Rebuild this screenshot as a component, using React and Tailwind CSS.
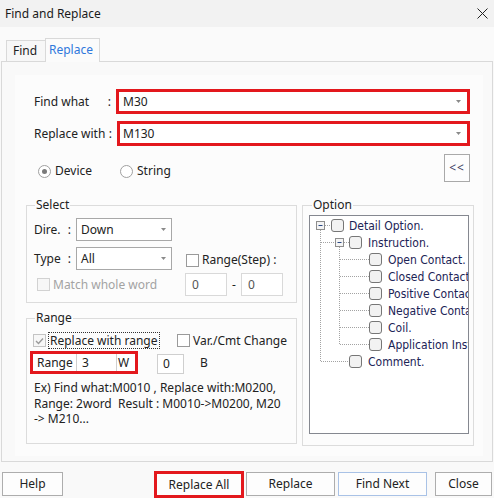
import React from "react";

const RED = "border-[3px] border-[#e3181d]";

function Arrow({ className = "" }) {
  return (
    <svg width="5" height="3" viewBox="0 0 5 3" className={className}>
      <path d="M0 0h5L2.5 3z" fill="#8a8a8a" />
    </svg>
  );
}

function Checkbox({ variant = "normal" }) {
  if (variant === "disabled") {
    return <span className="block w-[13px] h-[13px] shrink-0 border border-[#d2d2d2] bg-[#f7f7f7]" />;
  }
  if (variant === "checked") {
    return (
      <span className="flex items-center justify-center w-[13px] h-[13px] shrink-0 border border-[#c4c4c4] bg-[#f7f7f7]">
        <svg width="9" height="8" viewBox="0 0 9 8">
          <path d="M1 4l2.5 2.5L8 1.5" fill="none" stroke="#9a9a9a" strokeWidth="1.4" />
        </svg>
      </span>
    );
  }
  return <span className="block w-[13px] h-[13px] shrink-0 border border-[#9a9a9a] bg-white" />;
}

function Radio({ checked }) {
  return (
    <span className="flex items-center justify-center w-[13px] h-[13px] shrink-0 rounded-full border border-[#a0a0a0] bg-white">
      {checked && <span className="block w-[5px] h-[5px] rounded-full bg-[#7a7a7a]" />}
    </span>
  );
}

function Group({ title, className = "", legendClass = "ml-[8px]", children }) {
  return (
    <fieldset className={`border border-[#dcdcdc] ${className}`}>
      <legend className={`${legendClass} px-[1px] leading-[14px]`}>{title}</legend>
      {children}
    </fieldset>
  );
}

function Combo({ value }) {
  return (
    <div className="w-[96px] h-[23px] border border-[#a8a8a8] bg-white flex items-center justify-between pl-[4px] pr-[5px]">
      <span>{value}</span>
      <Arrow />
    </div>
  );
}

const treeRows = [
  { label: "Detail Option.", pl: "pl-[21px]", gap: "ml-[5px]" },
  { label: "Instruction.", pl: "pl-[39px]", gap: "ml-[6px]" },
  { label: "Open Contact.", pl: "pl-[59px]", gap: "ml-[6px]" },
  { label: "Closed Contact", pl: "pl-[59px]", gap: "ml-[6px]" },
  { label: "Positive Contact", pl: "pl-[59px]", gap: "ml-[6px]" },
  { label: "Negative Contact", pl: "pl-[59px]", gap: "ml-[6px]" },
  { label: "Coil.", pl: "pl-[59px]", gap: "ml-[6px]" },
  { label: "Application Instruction", pl: "pl-[59px]", gap: "ml-[6px]" },
  { label: "Comment.", pl: "pl-[39px]", gap: "ml-[6px]" },
];

function TreeLines() {
  const cy = (i) => 9.5 + 17 * i;
  const dot = { stroke: "#a3a3a3", strokeDasharray: "1 1", strokeWidth: 1 };
  return (
    <svg className="absolute left-0 top-0" width="158" height="217" viewBox="0 0 158 217">
      {/* level 1 */}
      <line x1="15" y1={cy(0)} x2="21" y2={cy(0)} {...dot} />
      <line x1="10.5" y1="14" x2="10.5" y2={cy(8)} {...dot} />
      <line x1="11" y1={cy(1)} x2="25" y2={cy(1)} {...dot} />
      <line x1="11" y1={cy(8)} x2="39" y2={cy(8)} {...dot} />
      {/* level 2 */}
      <line x1="34" y1={cy(1)} x2="39" y2={cy(1)} {...dot} />
      <line x1="29.5" y1="31" x2="29.5" y2={cy(7)} {...dot} />
      {[2, 3, 4, 5, 6, 7].map((i) => (
        <line key={i} x1="30" y1={cy(i)} x2="59" y2={cy(i)} {...dot} />
      ))}
      {/* expand boxes */}
      {[6.5, 25.5].map((x, i) => (
        <g key={x}>
          <rect x={x} y={cy(i) - 4} width="8" height="8" fill="#f4f4f4" stroke="#8e8e8e" />
          <line x1={x + 2} y1={cy(i)} x2={x + 6} y2={cy(i)} stroke="#2b4a86" />
        </g>
      ))}
    </svg>
  );
}

export default function App() {
  return (
    <div className="w-[494px] h-[498px] overflow-hidden bg-[#f9f9f9] text-[12px] text-[#222] font-['Noto_Sans','Liberation_Sans',sans-serif]">
      {/* Title bar */}
      <div className="h-[27px] bg-[#f2f2f2] flex items-center justify-between pl-[5px] pr-[6px]">
        <span className="text-[#1a1a1a]">Find and Replace</span>
        <svg width="11" height="11" viewBox="0 0 11 11">
          <path d="M0.5 0.5l10 10M10.5 0.5l-10 10" stroke="#222" strokeWidth="1" />
        </svg>
      </div>

      {/* Tabs */}
      <div className="h-[11px] bg-[#fafafa]" />
      <div className="h-[23px] flex items-end pl-[6px] bg-[#fafafa]">
        <div className="w-[40px] h-[21px] border-l border-t border-r border-[#d9d9d9] bg-[#f7f7f7] flex items-center pl-[6px]">
          Find
        </div>
        <div className="relative z-10 -ml-px -mb-px w-[55px] h-[24px] border-l border-t border-r border-[#d9d9d9] bg-[#fbfbfb] flex items-center pl-[3px] pb-[1px] text-[#2f78dc]">
          Replace
        </div>
      </div>

      {/* Panel */}
      <div className="mx-px h-[401px] border border-[#d9d9d9] bg-[#f9f9f9] pt-[13px] pl-[13px]">
        <div className="w-[468px] h-[381px] bg-[#fcfcfc] flex flex-col">
          {/* Find what */}
          <div className="flex items-center mt-[14px] h-[25px]">
            <div className="w-[101px] pl-[19px] pr-[5px] flex justify-between">
              <span>Find what</span>
              <span>:</span>
            </div>
            <div className={`w-[354px] h-[25px] ${RED} bg-white flex items-center justify-between pl-[4px] pr-[6px]`}>
              <span>M30</span>
              <Arrow />
            </div>
          </div>

          {/* Replace with */}
          <div className="flex items-center mt-[7px] h-[25px]">
            <div className="w-[102px] pl-[19px] pr-[5px] flex justify-between">
              <span>Replace with</span>
              <span>:</span>
            </div>
            <div className={`w-[353px] h-[25px] ${RED} bg-white flex items-center justify-between pl-[3px] pr-[6px]`}>
              <span>M130</span>
              <Arrow />
            </div>
          </div>

          {/* Radios + expand button */}
          <div className="flex mt-[8px] h-[28px]">
            <div className="flex items-center pl-[23px] pt-[6px]">
              <label className="flex items-center w-[82px]">
                <Radio checked />
                <span className="ml-[4px]">Device</span>
              </label>
              <label className="flex items-center">
                <Radio />
                <span className="ml-[4px]">String</span>
              </label>
            </div>
            <div className="ml-auto mr-[13px] w-[26px] h-[28px] border border-[#a9a9a9] bg-[#fdfdfd] flex items-center justify-center text-[#3a3a60] tracking-[1px]">
              &lt;&lt;
            </div>
          </div>

          {/* Groups */}
          <div className="flex mt-[16px] ml-[11px]">
            <div className="w-[271px] flex flex-col">
              <Group title="Select" className="h-[105px]">
                <div className="flex items-center mt-[6px] h-[23px]">
                  <div className="w-[49px] pl-[7px] pr-[5px] flex justify-between">
                    <span>Dire.</span>
                    <span>:</span>
                  </div>
                  <Combo value="Down" />
                </div>
                <div className="flex items-center mt-[6px] h-[23px]">
                  <div className="w-[49px] pl-[7px] pr-[5px] flex justify-between">
                    <span>Type</span>
                    <span>:</span>
                  </div>
                  <Combo value="All" />
                  <div className="flex items-center ml-[14px] mt-[3px]">
                    <Checkbox />
                    <span className="ml-[3px]">Range(Step) :</span>
                  </div>
                </div>
                <div className="flex items-center mt-[3px] h-[23px]">
                  <div className="w-[158px] pl-[10px] flex items-center text-[#a3a3a3]">
                    <Checkbox variant="disabled" />
                    <span className="ml-[3px]">Match whole word</span>
                  </div>
                  <div className="w-[42px] h-[23px] border border-[#d9d9d9] bg-white flex items-center pl-[6px] text-[#555]">0</div>
                  <div className="w-[14px] text-center">-</div>
                  <div className="w-[42px] h-[23px] border border-[#d9d9d9] bg-white flex items-center pl-[6px] text-[#555]">0</div>
                </div>
              </Group>

              <Group title="Range" className="h-[133px] mt-[8px]">
                <div className="flex items-center mt-[7px] h-[17px]">
                  <div className="w-[150px] pl-[6px] flex items-center">
                    <Checkbox variant="checked" />
                    <span className="ml-[2px] px-[1px] leading-[15px] border border-dotted border-[#333]">
                      Replace with range
                    </span>
                  </div>
                  <Checkbox />
                  <span className="ml-[3px]">Var./Cmt Change</span>
                </div>
                <div className="flex items-start mt-[2px] h-[23px] pl-[3px]">
                  <div className={`w-[108px] h-[23px] ${RED} bg-white flex`}>
                    <div className="w-[44px] pl-[4px] border-r border-[#cfcfcf] flex items-center">Range</div>
                    <div className="w-[40px] pl-[5px] border-r border-[#cfcfcf] flex items-center">3</div>
                    <div className="pl-[1px] flex items-center">W</div>
                  </div>
                  <div className="ml-[19px] mt-[3px] w-[27px] h-[20px] border border-[#cfcfcf] bg-white flex items-center pl-[5px]">
                    0
                  </div>
                  <div className="ml-[16px] h-[23px] flex items-center">B</div>
                </div>
                <div className="mt-[6px] pl-[7px] leading-[15.5px] whitespace-pre">
                  {"Ex) Find what:M0010 , Replace with:M0200,"}
                  <br />
                  {"Range: 2word  Result : M0010->M0200, M20"}
                  <br />
                  {"-> M210..."}
                </div>
              </Group>
            </div>

            <Group title="Option" className="ml-[5px] w-[172px] h-[248px]" legendClass="ml-[9px]">
              <div className="relative mt-[3px] ml-[6px] w-[160px] h-[219px] border border-[#858890] bg-white overflow-hidden pt-[1px] font-['DejaVu_Sans_Condensed','DejaVu_Sans',sans-serif] text-[12px] text-[#1c2456]">
                <TreeLines />
                {treeRows.map((row) => (
                  <div key={row.label} className={`relative h-[17px] flex items-center whitespace-nowrap ${row.pl}`}>
                    <span className="block w-[13px] h-[13px] shrink-0 rounded-[3px] border border-[#767676] bg-[#f2f2f2]" />
                    <span className={row.gap}>{row.label}</span>
                  </div>
                ))}
              </div>
            </Group>
          </div>
        </div>
      </div>

      {/* Bottom buttons */}
      <div className="flex items-start mt-[9px] pl-[2px]">
        <div className="w-[61px] h-[24px] mt-[1px] border border-[#adadad] bg-[#fdfdfd] flex items-center justify-center">Help</div>
        <div className={`ml-[91px] w-[90px] h-[27px] ${RED} bg-[#fdfdfd] flex items-center justify-center`}>Replace All</div>
        <div className="ml-[2px] w-[89px] h-[24px] mt-[1px] border border-[#adadad] bg-[#fdfdfd] flex items-center justify-center">Replace</div>
        <div className="ml-[3px] w-[89px] h-[24px] mt-[1px] border border-[#a9c2e6] bg-[#fdfdfd] flex items-center justify-center">Find Next</div>
        <div className="ml-[8px] w-[57px] h-[24px] mt-[1px] border border-[#adadad] bg-[#fdfdfd] flex items-center justify-center">Close</div>
      </div>
    </div>
  );
}
